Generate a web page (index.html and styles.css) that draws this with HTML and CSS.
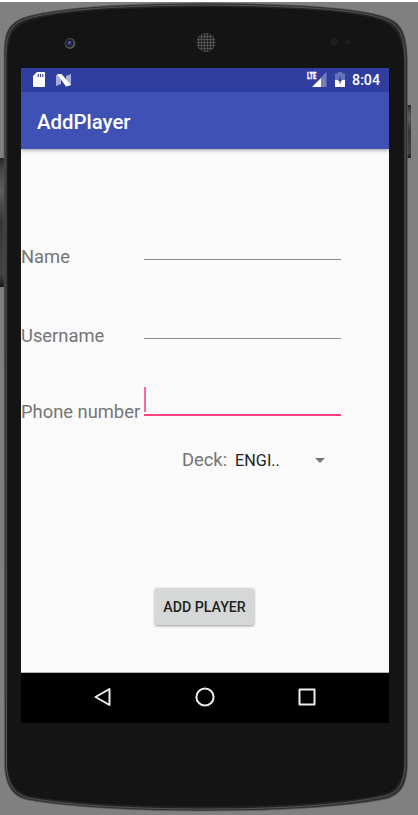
FILE: index.html
```html
<!DOCTYPE html>
<html lang="en">
<head>
<meta charset="utf-8">
<title>AddPlayer</title>
<link rel="stylesheet" href="styles.css">
</head>
<body>
<div class="device">
  <svg class="shell" width="418" height="815" viewBox="0 0 418 815" aria-hidden="true">
    <defs>
      <linearGradient id="key" x1="0" x2="0" y1="0" y2="1">
        <stop offset="0" stop-color="#222"/><stop offset=".08" stop-color="#444"/><stop offset=".25" stop-color="#5c5c5c"/><stop offset=".5" stop-color="#363636"/><stop offset=".9" stop-color="#444"/><stop offset="1" stop-color="#161616"/>
      </linearGradient>
      <pattern id="mesh" width="3" height="3" patternUnits="userSpaceOnUse">
        <rect width="3" height="3" fill="#202020"/><path d="M0 .5H3M.5 0V3" stroke="#585858" stroke-width=".8"/>
      </pattern>
    </defs>
    <rect x="-2" y="158" width="7" height="129" rx="1" fill="url(#key)"/>
    <rect x="406" y="105" width="5" height="53" rx="1" fill="url(#key)"/>
    <path class="rim" d="M4 60C4 38 5 27 19 19.500C31 13 70 8 110 5.500Q158 3 206 3T302 5.500C345 8 373 12 388 18C403 24 406.500 35 407.500 60V765C407 785 401 795 386 799C340 808 270 811 206 811S72 808 28 800C11 797 5 783 4.500 765Z"/>
    <path class="rim-light" d="M5.800 60C6 39 8 29 20 21.500C32 15 70 10 110 7.500Q158 5 206 5T302 7.500C345 10 372 14 386 20C400 26 404 36 405 60V765C404 783 399 792 385 796C340 806 270 809 206 809S72 806 29 798C13 795 7 781 6.500 765Z"/>
    <path class="face" d="M7.500 60C7.500 40 11 31 22 24C34 17 70 12 110 9.500Q158 7 206 7T302 9.500C345 12 371 16 384 22C397 28 402 38 403.500 60V765C402 782 397 790 384 794C340 804 270 806.500 206 806.500S72 804 30 796C15 793 8 780 7.500 765Z"/>
    <circle cx="70" cy="43.500" r="5.400" fill="#575757"/>
    <circle cx="69.500" cy="43" r="4.300" fill="#23232b"/>
    <circle cx="69.500" cy="43" r="2.300" fill="#30308a"/>
    <circle cx="69.500" cy="42.500" r=".8" fill="#8f91df"/>
    <circle cx="206" cy="42.500" r="9.500" fill="url(#mesh)"/>
    <circle cx="334" cy="42" r="4" fill="#1e1e1e"/>
    <circle cx="347.500" cy="42" r="2.500" fill="#202020"/>
  </svg>
  <main class="screen">
    <div class="status">
      <svg class="sd" width="12" height="15" viewBox="0 0 12 15"><path fill="#fff" d="M4 0H11Q12 0 12 1V14Q12 15 11 15H1Q0 15 0 14V4Z"/><path stroke="#303f9f" stroke-width="1.100" d="M5.200 2V5M7.500 2V5M9.800 2V5"/></svg>
      <svg class="nougat" width="15" height="13" viewBox="0 0 15 13"><path fill="#a6adda" d="M0 1L5 1V10L0 12ZM10 2L15 0V11L10 12Z"/><path fill="#fff" d="M1 0H5.500L15 11L10 12.500Z"/></svg>
      <span class="signal"><span class="lte">LTE</span><svg width="16" height="15" viewBox="0 0 16 15"><path fill="#747eba" d="M15.500 0V15H10V5.500Z"/><path fill="#fff" d="M10 6V15H1Z"/></svg></span>
      <svg class="battery" width="10" height="15" viewBox="0 0 10 15"><path fill="#6872b8" d="M3 0H7V1.500H10V8H0V1.500H3Z"/><path fill="#fff" d="M0 8H10V15H0Z"/><path fill="#303f9f" d="M5.800 3.500L3 9H4.600V12.500L7 7.800H5.800Z"/></svg>
      <span class="clock">8:04</span>
    </div>
    <header class="bar"><h1>AddPlayer</h1></header>
    <form class="form">
      <div class="row name"><span class="label">Name</span><span class="input"></span></div>
      <div class="row user"><span class="label">Username</span><span class="input"></span></div>
      <div class="row phone"><span class="label">Phone number</span><span class="input focus"><span class="caret"></span></span></div>
      <div class="deck"><span class="label">Deck:</span><span class="value">ENGI..</span><svg width="10" height="5" viewBox="0 0 10 5"><path fill="#757575" d="M0 0H10L5 5Z"/></svg></div>
      <button class="add" type="button">ADD PLAYER</button>
    </form>
    <nav class="nav">
      <svg width="20" height="20" viewBox="0 0 20 20"><path d="M16.500 2V18L2.500 10Z"/></svg>
      <svg width="20" height="20" viewBox="0 0 20 20"><circle cx="10" cy="10" r="8.600"/></svg>
      <svg width="20" height="20" viewBox="0 0 20 20"><rect x="2.500" y="2.500" width="15" height="15"/></svg>
    </nav>
  </main>
</div>
</body>
</html>
```
FILE: styles.css
```css
* { box-sizing: border-box; }
body { margin: 0; font-family: Roboto, sans-serif; overflow: hidden; }
.device { position: relative; width: 418px; height: 815px; padding: 66px 0 0 21px; background: #808080; border-top: 2px solid #fff; }
.shell { position: absolute; left: 0; top: -2px; }
.rim { fill: #323232; stroke: #5e5e5e; stroke-width: .6; }
.rim-light { fill: #242424; stroke: #535353; stroke-width: 1; }
.face { fill: #141414; }
.screen { position: relative; display: flex; flex-direction: column; width: 368px; height: 655px; background: #fafafa; }
.status { display: flex; align-items: flex-start; height: 24px; padding: 4px 9px 0 12px; background: #303f9f; color: #fff; }
.nougat { margin: 2px 0 0 11px; }
.signal { display: flex; margin-left: auto; }
.lte { font: 900 9.5px/8px "Roboto", sans-serif; width: 9px; transform: scaleX(.6); transform-origin: left; margin-right: -5px; white-space: nowrap; -webkit-text-stroke: .3px #fff; }
.battery { margin-left: 8px; }
.clock { margin-left: 7px; font-size: 14.2px; font-weight: 500; line-height: 17px; }
.bar { display: flex; align-items: center; height: 57px; padding: 2px 0 0 16px; background: #3f51b5; color: #fff; box-shadow: 0 1px 4px rgba(0,0,0,.4); clip-path: inset(0 0 -6px 0); }
h1 { margin: 0; font-size: 20.4px; font-weight: 500; line-height: 24px; }
.form { display: flex; flex-direction: column; height: 524px; border-bottom: 1px solid #b5b5b5; }
.row { display: flex; align-items: flex-start; height: 28px; }
.label { font-size: 18.35px; line-height: 24px; color: #757575; white-space: nowrap; }
.row .label { width: 123px; }
.input { width: 197px; height: 15px; border-bottom: 1px solid #8b8b8b; }
.name { margin-top: 96px; }
.user { margin-top: 51px; }
.phone { margin-top: 48px; }
.phone .input { height: 29px; margin-top: -13px; border-bottom: 2px solid #ff4081; }
.caret { display: block; width: 2px; height: 25px; background: #ff649a; }
.deck { display: flex; align-items: center; margin: 20px 0 0 161px; height: 24px; }
.value { width: 80px; margin-left: 8px; padding-top: 2px; font-size: 16.2px; line-height: 24px; color: #212121; }
.add { width: 99px; height: 37px; margin: 116px 0 0 134px; padding: 0; border: 0; border-radius: 2px; background: #d6d7d7; box-shadow: 0 1px 3px rgba(0,0,0,.4); color: #212121; font: 500 14.2px/20px Roboto, sans-serif; white-space: nowrap; }
.nav { display: flex; align-items: center; gap: 82px; height: 50px; padding: 0 0 2px 72px; background: #000; }
.nav svg { fill: none; stroke: #eee; stroke-width: 2; stroke-linejoin: round; }
```
